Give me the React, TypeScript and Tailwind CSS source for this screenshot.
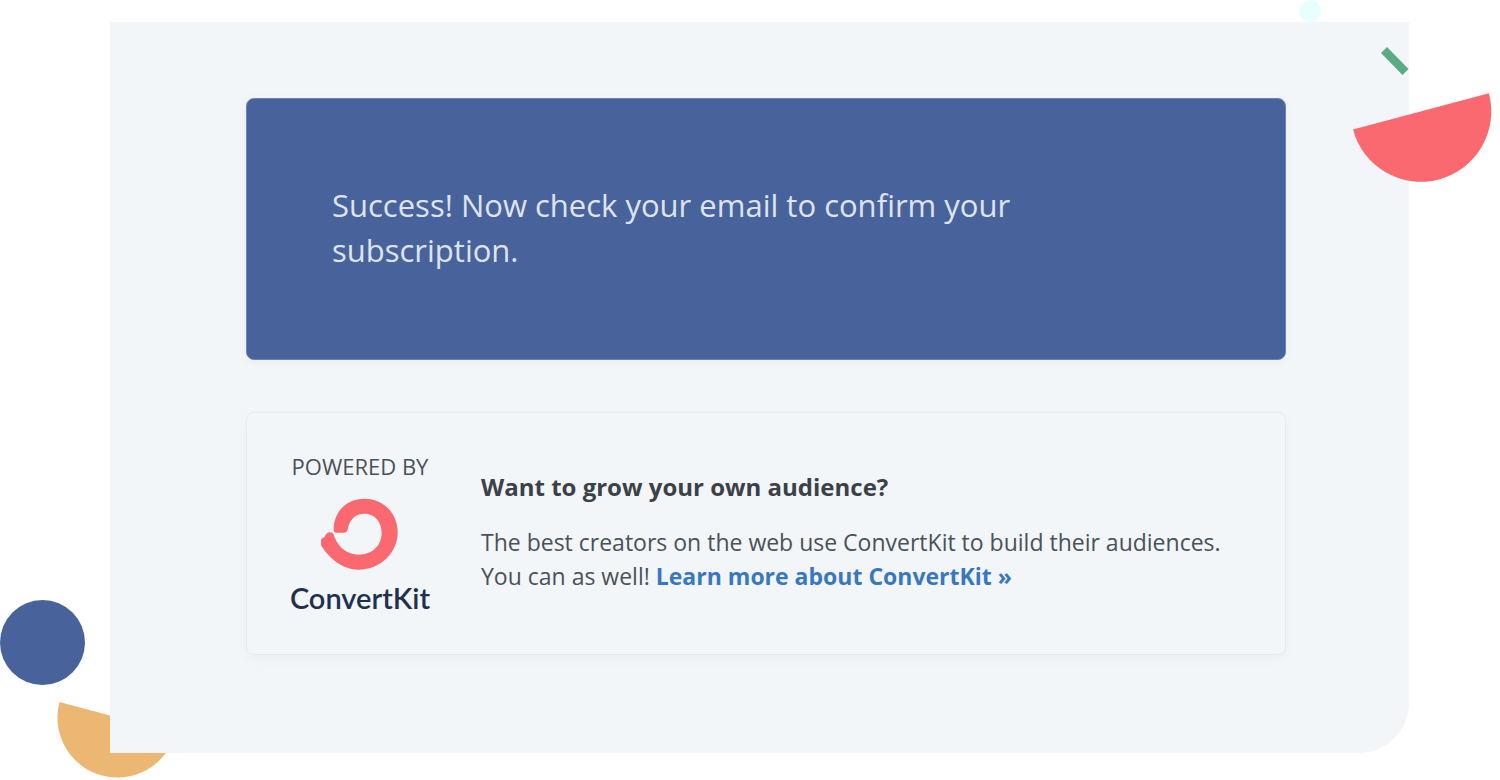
import React from 'react';

function Shapes() {
  return (
    <>
      <svg className="absolute top-0 right-[179px]" width="22" height="22" viewBox="0 0 22 22" aria-hidden="true">
        <circle cx="11" cy="11" r="11" fill="#e8ffff" />
      </svg>
      <svg className="absolute top-[46px] right-[90px]" width="30" height="30" viewBox="0 0 30 30" aria-hidden="true">
        <path d="M7 1 L28.500 23 L22.500 29 L1 7 Z" fill="#5aab7f" />
      </svg>
      <svg className="absolute top-[92px] right-[8px]" width="140" height="91" viewBox="0 0 140 91" aria-hidden="true">
        <path d="M1 37.600 L136.900 1.300 A70 70 0 0 1 1 37.600 Z" fill="#fb6970" />
      </svg>
    </>
  );
}

function BottomShapes() {
  return (
    <>
      <svg className="absolute bottom-[95px] left-0" width="85" height="85" viewBox="0 0 85 85" aria-hidden="true">
        <circle cx="42.500" cy="42.500" r="42.500" fill="#48639c" />
      </svg>
      <svg className="absolute bottom-[2px] left-[56px]" width="124" height="78" viewBox="0 0 124 78" aria-hidden="true">
        <path d="M3.500 2 L119.400 33.100 A60 60 0 0 1 3.500 2 Z" fill="#ecb772" />
      </svg>
    </>
  );
}

function ConvertKitMark() {
  return (
    <svg className="w-[78px] h-[72px]" viewBox="122 175 234 216" aria-hidden="true">
      <path
        fill="#fb6970"
        d="M160 270 C160 215 200 177 253 177 C308 177 352 220 352 278 C352 340 300 390 235 390 C187 390 147 356 123 318 C120 303 122 294 132 293 C137 282 142 277 150 278 C159 279 160 284 163 293 C175 324 200 345 235 345 C275 345 304 318 304 280 C304 245 282 222 253 222 C225 222 208 240 203 265 C201 274 199 279 192 279 H168 Q160 279 160 270 Z"
      />
    </svg>
  );
}

export default function App() {
  return (
    <div className="relative min-h-screen overflow-hidden bg-white pt-[22px] pb-[27px] pl-[110px] pr-[91px] font-['Open_Sans',sans-serif]">
      <BottomShapes />
      <main className="relative min-h-[731px] rounded-br-[50px] bg-[#f2f6f9] pt-[76px] pb-[98px] pl-[136px] pr-[123px]">
        <section className="flex min-h-[262px] items-center rounded-lg border border-[#6d82b0] bg-[#48639c] px-[85px] pb-0.5 shadow-[0_2px_12px_rgba(0,0,0,0.04)]">
          <p className="max-w-[700px] text-[31px] leading-[45px] text-[#dfe3ec]">
            Success! Now check your email to confirm your subscription.
          </p>
        </section>

        <section className="mt-[52px] flex min-h-[243px] items-center rounded-lg border border-[#e7ebee] px-[42px] shadow-[0_4px_12px_rgba(0,0,0,0.03)]">
          <div className="flex w-[142px] shrink-0 flex-col items-center">
            <span className="text-[22px] leading-6 text-[#4b5157]">POWERED BY</span>
            <div className="mt-5">
              <ConvertKitMark />
            </div>
            <span className="mt-3 font-['Lato',sans-serif] text-[29px] leading-8 font-semibold text-[#22304f]">ConvertKit</span>
          </div>
          <div className="ml-[50px] pb-1">
            <h2 className="text-[24px] leading-[34px] font-bold text-[#3b4147]">Want to grow your own audience?</h2>
            <p className="mt-[21px] text-[23px] leading-[34px] text-[#4b5157]">
              The best creators on the web use ConvertKit to build their audiences.
              <br />
              You can as well!{' '}
              <a href="#" className="font-bold text-[#3878c2]">
                Learn more about ConvertKit »
              </a>
            </p>
          </div>
        </section>
      </main>
      <Shapes />
    </div>
  );
}
